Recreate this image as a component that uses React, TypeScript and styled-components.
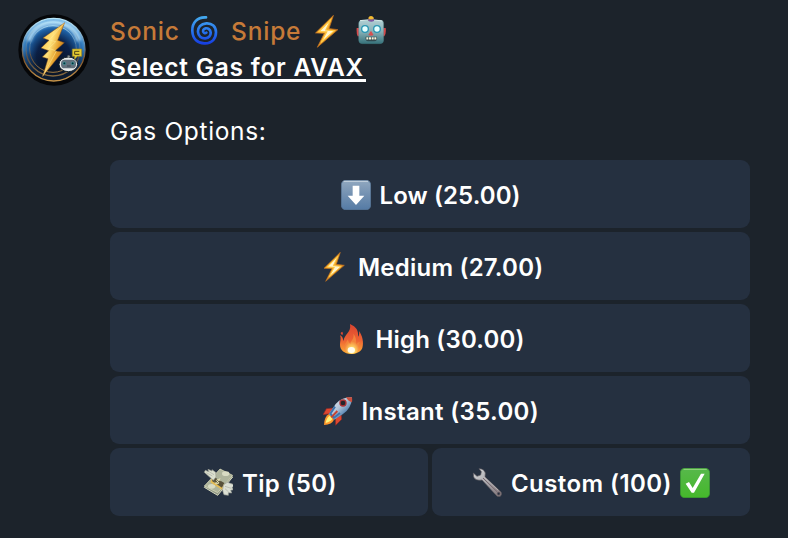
import React from "react";
import styled, { createGlobalStyle } from "styled-components";

const GlobalStyle = createGlobalStyle`
  * { box-sizing: border-box; }
  body { margin: 0; background: #1c232b; }
`;

const Message = styled.main`
  width: 788px;
  height: 538px;
  display: flex;
  align-items: flex-start;
  gap: 20px;
  padding: 14px 38px 0 18px;
  background: #1c232b;
  color: #fff;
  font-family: Inter, "Liberation Sans", sans-serif;
  overflow: hidden;
`;

const Content = styled.div`
  width: 640px;
  display: flex;
  flex-direction: column;
  align-items: flex-start;
`;

const Glyph = styled.svg<{ $size?: number; $start?: number }>`
  display: block;
  flex: none;
  width: ${(p) => p.$size ?? 30}px;
  height: ${(p) => p.$size ?? 30}px;
  margin-left: ${(p) => p.$start ?? 0}px;
`;

const Sender = styled.header`
  height: 34px;
  display: flex;
  align-items: center;
  color: #c67a38;
`;

const Text = styled.span<{ $width: number; $spacing?: number; $weight?: number; $start?: number }>`
  display: block;
  flex: none;
  width: ${(p) => p.$width}px;
  margin-left: ${(p) => p.$start ?? 0}px;
  font-size: 24.5px;
  line-height: 34px;
  font-weight: ${(p) => p.$weight ?? 500};
  letter-spacing: ${(p) => p.$spacing ?? 0}px;
  white-space: nowrap;
`;

const OptionLabel = styled(Text)`
  padding-top: 2px;
  font-size: 24px;
  text-align: left;
`;

const Title = styled.h1`
  width: 256px;
  height: 32px;
  margin: 2px 0 0;
  padding-top: 4px;
  border-bottom: 3px solid #fff;
  display: flex;
  align-items: center;
`;

const Caption = styled.p`
  margin: 32px 0 12px;
`;

const Keyboard = styled.div`
  display: grid;
  grid-template-columns: 1fr 1fr;
  gap: 4px;
  width: 640px;
`;

const Option = styled.button<{ $wide?: boolean }>`
  grid-column: ${(p) => (p.$wide ? "span 2" : "span 1")};
  height: 68px;
  display: flex;
  align-items: center;
  justify-content: center;
  gap: 9px;
  padding: 2px 0 0;
  border: 0;
  border-radius: 9px;
  background: #253040;
  color: #fff;
  font-family: inherit;
`;

const Avatar = () => (
  <Glyph $size={72} viewBox="24 27 216 216">
    <defs>
      <radialGradient id="orb" cx=".5" cy=".6" r=".6">
        <stop offset="0" stopColor="#07132c" /><stop offset=".45" stopColor="#0b2148" />
        <stop offset=".75" stopColor="#1f66ad" /><stop offset="1" stopColor="#6ab4e6" />
      </radialGradient>
      <linearGradient id="shade" x1="0" y1="0" x2="0" y2="1">
        <stop offset=".5" stopColor="#0a1322" stopOpacity="0" /><stop offset=".85" stopColor="#0a1322" stopOpacity=".85" />
      </linearGradient>
      <linearGradient id="rim" x1="0" y1="0" x2="0" y2="1">
        <stop offset="0" stopColor="#b9e7fa" /><stop offset=".42" stopColor="#5b86ab" />
        <stop offset=".65" stopColor="#80552c" /><stop offset="1" stopColor="#c79448" />
      </linearGradient>
      <linearGradient id="gold" x1="0" y1="0" x2="1" y2=".7">
        <stop offset="0" stopColor="#ffc03a" /><stop offset=".45" stopColor="#ffe27a" />
        <stop offset=".7" stopColor="#e5a02c" /><stop offset="1" stopColor="#a95b13" />
      </linearGradient>
      <filter id="soft" x="-30%" y="-50%" width="160%" height="200%"><feGaussianBlur stdDeviation="5" /></filter>
    </defs>
    <circle cx="132" cy="135" r="107" fill="#050608" />
    <circle cx="131" cy="134" r="94" fill="url(#orb)" />
    <circle cx="131" cy="134" r="94" fill="url(#shade)" stroke="url(#rim)" strokeWidth="4" />
    <path d="M56 108Q72 54 132 53Q192 54 207 108" fill="none" stroke="#c5ebff" strokeWidth="16" opacity=".75" filter="url(#soft)" />
    <circle cx="129" cy="132" r="81" fill="none" stroke="url(#rim)" strokeWidth="4" opacity=".65" />
    <circle cx="129" cy="132" r="70" fill="none" stroke="url(#rim)" strokeWidth="3" opacity=".8" />
    <path d="M164 53 99 99 117 106 93 129 116 137 97 156 114 161 98 214 158 140 135 138 163 113 143 106Z" fill="url(#gold)" stroke="#7e4a1d" strokeWidth="1.5" />
    <path d="M164 53 118 105 137 110 116 130 139 138 98 214" fill="none" stroke="#ffe999" strokeWidth="3" opacity=".5" />
    <path d="M176 164V153" stroke="#22272b" strokeWidth="6" />
    <circle cx="176" cy="156" r="5" fill="#d7e0df" stroke="#20262c" strokeWidth="2" />
    <ellipse cx="175" cy="178" rx="28" ry="22" fill="#e8ecec" stroke="#152129" strokeWidth="3" />
    <rect x="153" y="164" width="45" height="26" rx="11" fill="#62717d" />
    <circle cx="163" cy="175" r="4" fill="#082f38" stroke="#43a8aa" strokeWidth="2" />
    <circle cx="188" cy="175" r="4" fill="#082f38" stroke="#43a8aa" strokeWidth="2" />
    <path d="M171 183H182" stroke="#253139" strokeWidth="2" />
    <path d="M187 132H215V154H202L194 163V154H187Z" fill="#e4cb32" stroke="#9b8524" strokeWidth="2" />
    <path d="M208 139H194V148H208" fill="none" stroke="#4b421b" strokeWidth="3" />
  </Glyph>
);

const Cyclone = () => (
  <Glyph $start={11} viewBox="267 31 90 90">
    <defs><linearGradient id="swirl" x2="0" y2="1"><stop stopColor="#43a8ee" /><stop offset=".6" stopColor="#246eed" /><stop offset="1" stopColor="#1740e2" /></linearGradient></defs>
    <g fill="none" stroke="url(#swirl)" strokeLinecap="round" strokeLinejoin="round">
      <path d="M318 35C292 34 276 51 277 76C278 100 293 114 315 113C337 113 348 98 348 80C348 63 336 52 319 53C302 54 293 66 294 79C295 92 305 99 316 98C327 97 333 89 332 80C331 71 324 67 317 68C311 69 308 74 310 79C312 83 316 84 319 81" strokeWidth="8" />
    </g>
  </Glyph>
);

const Bolt = ({ size = 30, start = 0 }: { size?: number; start?: number }) => (
  <Glyph $size={size} $start={start} viewBox="30 30 90 90">
    <defs><linearGradient id="bolt" x1="0" y1="0" x2="1" y2="1"><stop stopColor="#c66b1b" /><stop offset=".35" stopColor="#ffb52e" /><stop offset="1" stopColor="#b95e18" /></linearGradient></defs>
    <path d="M94 31 45 79 69 80 50 118 106 70 82 67Z" fill="url(#bolt)" stroke="#be6e20" strokeWidth="2" strokeLinejoin="round" />
    <path d="M87 42 55 75 76 76 60 105 97 73 73 71Z" fill="#fff6cf" stroke="#ffc83f" strokeWidth="3" />
  </Glyph>
);

const Robot = () => (
  <Glyph $start={13} viewBox="319 31 90 90">
    <defs><linearGradient id="robot" x2="0" y2="1"><stop stopColor="#b1d0d4" /><stop offset=".5" stopColor="#87afb5" /><stop offset="1" stopColor="#36727b" /></linearGradient></defs>
    <g transform="translate(0 1)">
      <path d="M321 66h9v25h-6q-4-5-3-25m79 0h8q2 17-4 25h-6" fill="#d84a4b" />
      <rect x="327" y="42" width="75" height="71" rx="11" fill="url(#robot)" stroke="#477b83" />
      <path d="M331 44Q363 37 398 45" stroke="#d7e9e8" strokeWidth="3" fill="none" />
      <path d="M356 45V35q8-6 17 0v10Z" fill="#bd9738" /><ellipse cx="364" cy="35" rx="7" ry="5" fill="#f3bc31" /><path d="M356 38q8 5 17 0v7q-8 5-17 0Z" fill="#7b57a2" />
      <circle cx="346" cy="69" r="10" fill="#e4ffff" stroke="#2996b3" strokeWidth="4" /><circle cx="382" cy="69" r="10" fill="#e4ffff" stroke="#2996b3" strokeWidth="4" />
      <path d="m364 74 8 13q-8 4-16 0Z" fill="#d65050" />
      <path d="M348 92H382Q384 105 374 106H355Q346 104 348 92Z" fill="#314a50" /><path d="M350 97H380" stroke="#f8f4da" strokeWidth="7" strokeDasharray="6 2" />
    </g>
  </Glyph>
);

const Down = () => (
  <Glyph viewBox="48 30 90 90">
    <defs><linearGradient id="down" x2="0" y2="1"><stop stopColor="#91a8c0" /><stop offset=".5" stopColor="#7290b1" /><stop offset="1" stopColor="#557ba5" /></linearGradient></defs>
    <rect x="49" y="31" width="88" height="88" rx="13" fill="url(#down)" stroke="#5b7a9d" strokeWidth="2" />
    <path d="M57 34H128" stroke="#c7d4e0" strokeWidth="3" strokeLinecap="round" />
    <path d="M83 47H103V77H118L93 105 68 77H83Z" fill="#fff" />
  </Glyph>
);

const Fire = () => (
  <Glyph viewBox="36 27 90 90">
    <defs><linearGradient id="fire" x2="0" y2="1"><stop stopColor="#d9432f" /><stop offset=".55" stopColor="#ed6334" /><stop offset="1" stopColor="#ffae32" /></linearGradient>
      <radialGradient id="flame" cx=".5" cy=".88"><stop stopColor="#fffbe1" /><stop offset=".35" stopColor="#ffe06a" /><stop offset="1" stopColor="#f3843b" /></radialGradient></defs>
    <path d="M75 27C94 36 101 46 99 65 103 61 103 54 102 48 112 61 117 82 112 99 107 112 92 117 78 117 58 117 44 105 45 88 45 78 49 71 45 61 54 65 54 74 56 78 56 59 80 53 75 27Z" fill="url(#fire)" />
    <path d="M48 57Q45 52 52 50Q56 54 52 61Z" fill="#d94732" />
    <path d="M85 56C89 73 77 76 76 87 72 83 69 79 69 73 60 88 54 96 61 108 69 119 92 118 99 109 106 100 100 90 104 81 98 82 95 86 93 89 94 76 93 65 85 56Z" fill="url(#flame)" />
    <ellipse cx="79" cy="105" rx="11" ry="9" fill="#fffbed" />
  </Glyph>
);

const Rocket = () => (
  <Glyph viewBox="39 27 90 90">
    <defs><linearGradient id="rocket" x1="0" y1="0" x2="1" y2="1"><stop stopColor="#f4f7fc" /><stop offset=".45" stopColor="#b3c3d6" /><stop offset=".75" stopColor="#477aae" /><stop offset="1" stopColor="#224d80" /></linearGradient></defs>
    <path d="M70 63 49 65 39 83 62 80ZM94 84 95 97 77 115 76 92Z" fill="#de4730" stroke="#892a28" strokeWidth="2" />
    <path d="M57 81Q43 88 42 114Q66 112 72 98Z" fill="#ff982c" /><path d="M59 86Q49 93 47 108Q62 104 67 96Z" fill="#fff57a" />
    <path d="M126 31Q96 29 77 51L57 81 73 98 98 82Q125 65 126 31Z" fill="url(#rocket)" />
    <path d="M75 59 61 80 72 92 90 78" fill="none" stroke="#3b74b0" strokeWidth="6" />
    <path d="M108 31Q114 43 126 46Q127 38 126 31Z" fill="#ca4e3d" />
    <circle cx="99" cy="48" r="9" fill="#25252b" stroke="#a83134" strokeWidth="4" />
    <path d="M64 91 82 72" stroke="#c64332" strokeWidth="6" />
  </Glyph>
);

const Money = () => (
  <Glyph viewBox="39 39 90 90">
    <path d="M43 97 91 44 128 66 83 121Z" fill="#8f9685" stroke="#d7d9be" strokeWidth="3" />
    <path d="M43 93 90 42 128 61 83 113Z" fill="#aeb49c" stroke="#e0dfbd" strokeWidth="2" />
    <ellipse cx="65" cy="94" rx="11" ry="7" fill="#d8dbc3" /><ellipse cx="107" cy="56" rx="11" ry="7" fill="#d8dbc3" />
    <path d="M66 66 104 88 97 105 61 82Z" fill="#e5bd55" /><path d="M71 65 103 84 96 98 66 78Z" fill="#57513a" />
    <path d="M90 70 77 87M91 77Q81 70 80 76Q80 79 85 81Q89 84 84 86Q79 88 74 82" fill="none" stroke="#ede8b7" strokeWidth="3" />
    <path d="M70 76 43 52 46 46 56 50 54 43 66 48 66 44 77 52 78 66Z" fill="#dce0cf" stroke="#9b9f94" strokeWidth="2" />
    <path d="M101 89 112 82 129 88 132 94 126 97 130 104 122 106 125 114 115 113 115 121 102 119Q94 104 101 89Z" fill="#dce0d4" stroke="#9da198" strokeWidth="2" />
    <path d="M49 53 67 63M57 50 72 59M105 94 124 100M105 101 116 111" stroke="#aaaea3" strokeWidth="2" />
  </Glyph>
);

const Wrench = () => (
  <Glyph viewBox="33 39 90 90">
    <defs><linearGradient id="steel" x1="0" x2="1" y2="1"><stop stopColor="#d7dadb" /><stop offset=".5" stopColor="#a6a5ab" /><stop offset="1" stopColor="#807477" /></linearGradient></defs>
    <path d="M37 54 48 64 59 60 61 50 54 41Q69 41 73 54L72 66 120 111Q124 118 118 124Q109 127 104 119L63 75Q44 78 38 66Z" fill="url(#steel)" stroke="#5c575d" strokeWidth="2" strokeLinejoin="round" />
    <path d="M66 69 109 111" stroke="#77666c" strokeWidth="3" /><path d="M70 66 112 106" stroke="#cbc5c4" strokeWidth="2" />
    <circle cx="113" cy="116" r="4" fill="#253040" stroke="#67575e" strokeWidth="2" />
  </Glyph>
);

const Check = () => (
  <Glyph viewBox="45 39 90 90">
    <defs><linearGradient id="check" x2="0" y2="1"><stop stopColor="#57b84b" /><stop offset="1" stopColor="#45b82b" /></linearGradient></defs>
    <rect x="46" y="40" width="88" height="88" rx="13" fill="url(#check)" stroke="#37982f" strokeWidth="2" />
    <path d="M57 43H124" stroke="#98d781" strokeWidth="3" strokeLinecap="round" />
    <path d="M62 86 72 81 83 99 108 56 119 56 87 113H80Z" fill="#fff" />
  </Glyph>
);

const options = [
  { label: "Low (25.00)", icon: <Down />, width: 140, spacing: 0.1, wide: true },
  { label: "Medium (27.00)", icon: <Bolt />, width: 183, spacing: 0.22, wide: true },
  { label: "High (30.00)", icon: <Fire />, width: 148, spacing: 0.18, wide: true },
  { label: "Instant (35.00)", icon: <Rocket />, width: 176, spacing: 0.34, wide: true },
  { label: "Tip (50)", icon: <Money />, width: 93, spacing: 0.35 },
  { label: "Custom (100)", icon: <Wrench />, width: 160, spacing: 0.43, selected: true },
];

export default function App() {
  return (
    <>
      <GlobalStyle />
      <Message>
        <Avatar />
        <Content>
          <Sender>
            <Text $width={68} $spacing={0.8}>Sonic</Text>
            <Cyclone />
            <Text $width={70} $start={12} $spacing={0.8}>Snipe</Text>
            <Bolt size={33} start={9} />
            <Robot />
          </Sender>
          <Title><Text $width={256} $weight={600} $spacing={0.75}>Select Gas for AVAX</Text></Title>
          <Caption><Text $width={156} $weight={400} $spacing={0.65}>Gas Options:</Text></Caption>
          <Keyboard>
            {options.map((option) => (
              <Option key={option.label} $wide={option.wide}>
                {option.icon}
                <OptionLabel $width={option.width} $spacing={option.spacing} $weight={600}>{option.label}</OptionLabel>
                {option.selected && <Check />}
              </Option>
            ))}
          </Keyboard>
        </Content>
      </Message>
    </>
  );
}
